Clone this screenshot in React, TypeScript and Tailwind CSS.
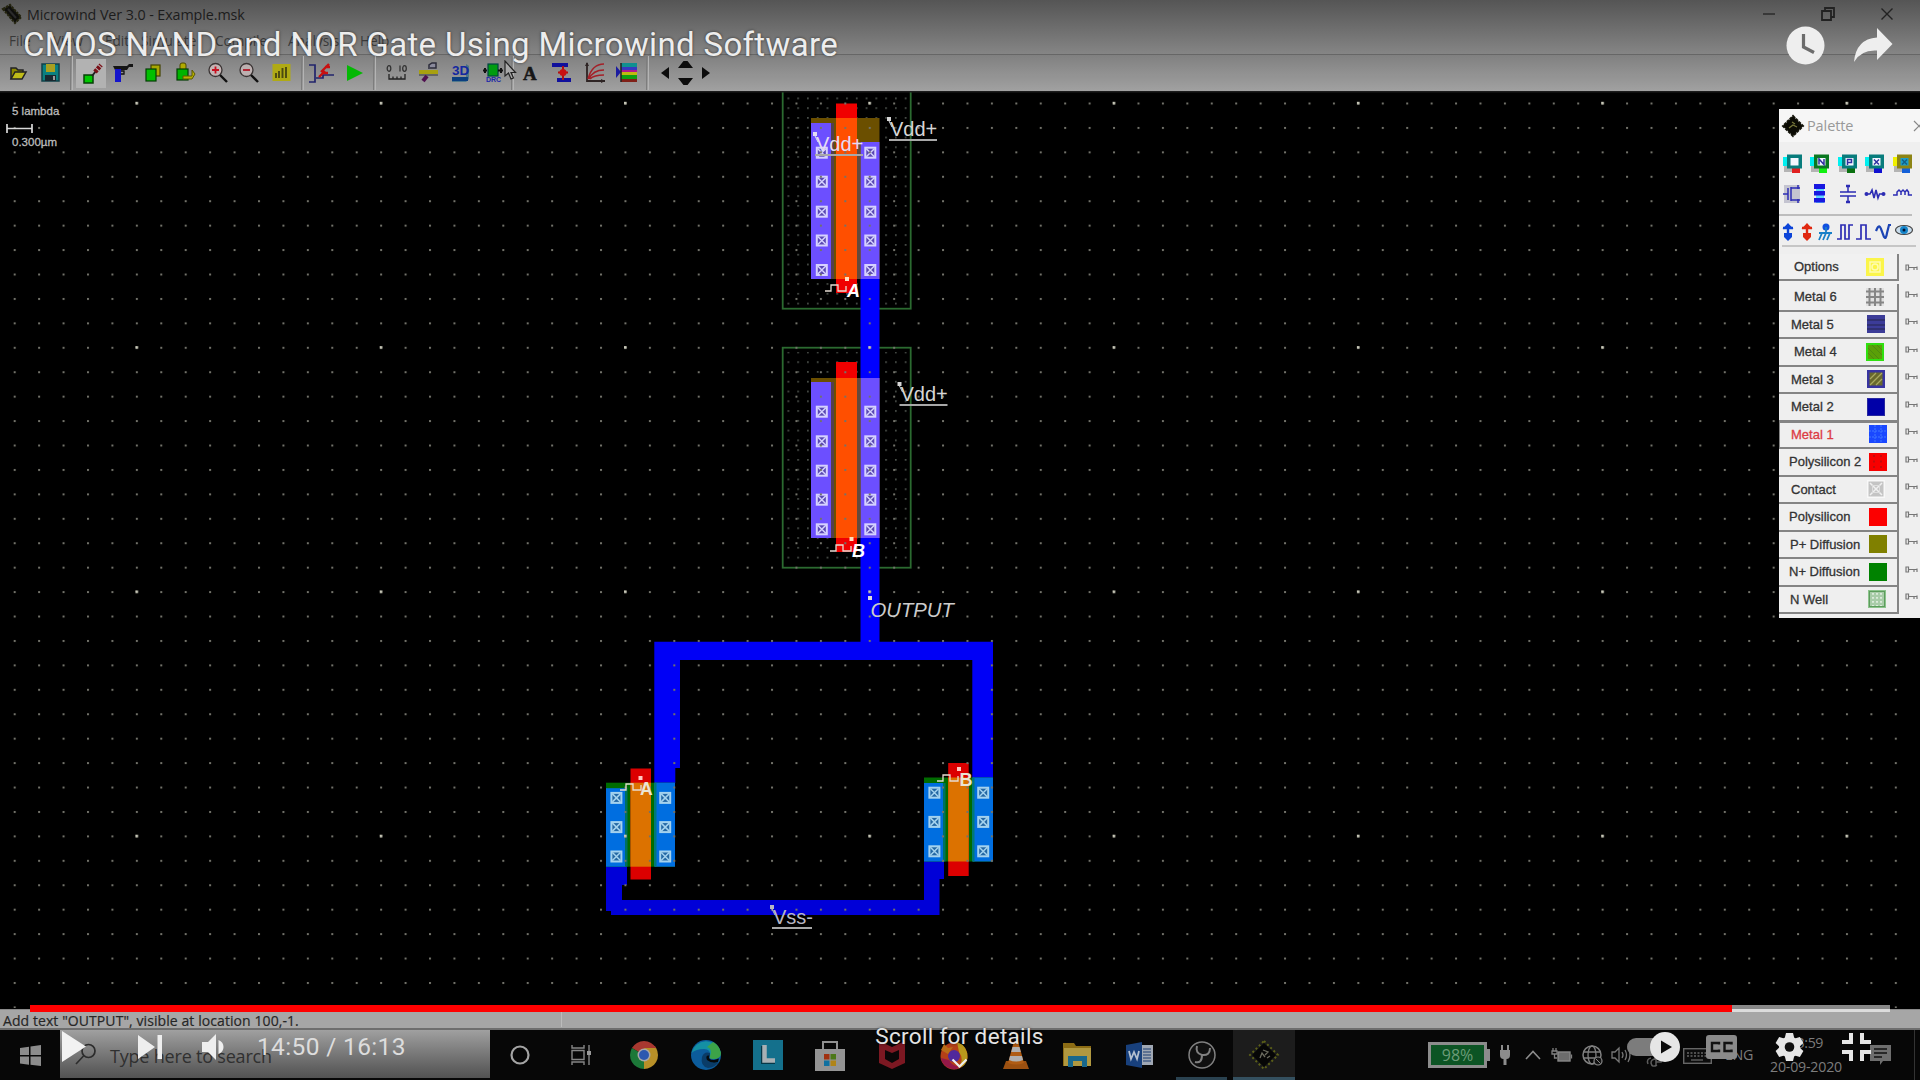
import React from "react";

const STEP = 24.43;

function Svg({ w, h, children, className = "" }: { w: number; h: number; children: React.ReactNode; className?: string }) {
  return (
    <svg width={w} height={h} viewBox={`0 0 ${w} ${h}`} className={"shrink-0 overflow-visible " + className}>
      {children}
    </svg>
  );
}

/* ---------- window chrome ---------- */

function ChipLogo() {
  return (
    <Svg w={20} h={20}>
      <path d="M1 5 L8 1 L19 13 L13 19 Z" fill="#0e0e0c" stroke="#24240f" strokeWidth="2.2" strokeDasharray="2.5 1" />
      <path d="M6 5 L14 14" stroke="#2a2a2a" strokeWidth="2" />
    </Svg>
  );
}

function TitleBar() {
  return (
    <div className="flex h-[28px] items-center pl-[2px]">
      <ChipLogo />
      <span className="ml-[5px] mt-[2px] whitespace-nowrap text-[14.3px] leading-none tracking-[-0.08px] text-[#1c1c1c]">Microwind Ver 3.0 - Example.msk</span>
      <div className="ml-auto mr-[27px] flex items-center gap-[46px]">
        <Svg w={12} h={14}>
          <path d="M0 7 H12" stroke="#222" strokeWidth="1.3" />
        </Svg>
        <Svg w={14} h={14}>
          <path d="M1 4 H10 V13 H1 Z M4 4 V1 H13 V10 H10" fill="none" stroke="#222" strokeWidth="1.8" />
        </Svg>
        <Svg w={12} h={14}>
          <path d="M0.5 1.5 L11.5 12.5 M11.5 1.5 L0.5 12.5" stroke="#222" strokeWidth="1.4" />
        </Svg>
      </div>
    </div>
  );
}

const MENUS = [
  { t: "File", c: "w-[44px]" },
  { t: "View", c: "w-[52px]" },
  { t: "Edit", c: "w-[36px]" },
  { t: "Simulate", c: "w-[74px]" },
  { t: "Compile", c: "w-[73px]" },
  { t: "Analysis", c: "w-[72px]" },
  { t: "Help", c: "w-[40px]" },
];

function MenuBar() {
  return (
    <div className="flex h-[26px] items-center pl-[9px] text-[13.6px] leading-none text-[#393939]">
      {MENUS.map((m) => (
        <span key={m.t} className={m.c}>{m.t}</span>
      ))}
    </div>
  );
}

function Sep() {
  return <div className="h-[34px] w-[3px] shrink-0 border-l border-r border-l-[#7d7d7d] border-r-[#b4b4b4]" />;
}

const GROUP2 = [
  <Svg w={22} h={22}>
    <rect x="2" y="12" width="9" height="8" fill="#00c800" stroke="#064006" strokeWidth="1.5" />
    <path d="M10 13 L14 8" stroke="#222" strokeWidth="2" />
    <path d="M13 9 L19 2" stroke="#7a1018" strokeWidth="4.5" strokeDasharray="3 1" />
  </Svg>,
  <Svg w={22} h={22}>
    <path d="M1 4 H15 L17 2 H21 V5 H17 L15 8 H3 Z" fill="#151515" />
    <rect x="3" y="7" width="6" height="13" fill="#1414cc" />
    <path d="M9 9 H12 V12 H9" fill="none" stroke="#111" strokeWidth="1.3" />
  </Svg>,
  <Svg w={20} h={22}>
    <rect x="7" y="3" width="9" height="11" fill="#a8a800" stroke="#444400" strokeWidth="1.2" />
    <rect x="2" y="7" width="10" height="12" fill="#00c000" stroke="#043c04" strokeWidth="1.2" />
  </Svg>,
  <Svg w={22} h={22}>
    <rect x="5" y="1" width="6" height="8" rx="2" fill="#b0aa00" stroke="#4a4800" strokeWidth="1" />
    <rect x="2" y="7" width="11" height="11" fill="#00b400" stroke="#043c04" strokeWidth="1.2" />
    <path d="M8 14 H17 V8 L20 12 L17 17 H8 Z" fill="#b8b000" stroke="#5a5800" strokeWidth="1" />
  </Svg>,
  <Svg w={22} h={22}>
    <circle cx="8.5" cy="8" r="6.5" fill="#c4b4b4" stroke="#3a3434" strokeWidth="1.3" />
    <path d="M5 8 H12 M8.5 4.5 V11.5" stroke="#c81020" strokeWidth="1.8" />
    <path d="M13 13 L20 20" stroke="#111" strokeWidth="2.4" />
  </Svg>,
  <Svg w={22} h={22}>
    <circle cx="8.5" cy="8" r="6.5" fill="#bcb0b0" stroke="#3a3434" strokeWidth="1.3" />
    <path d="M5 8 H12" stroke="#b01828" strokeWidth="1.8" />
    <path d="M13 13 L20 20" stroke="#111" strokeWidth="2.4" />
  </Svg>,
  <Svg w={20} h={20}>
    <rect x="1.5" y="1" width="18" height="17" fill="#b0aa14" />
    <path d="M5 15 V10 M8 15 V8 M11.5 15 V5 M15 15 V4" stroke="#4c4a10" strokeWidth="1.9" />
  </Svg>,
];

const GROUP3 = [
  <Svg w={26} h={22}>
    <path d="M0 3 H6 V20 H0 M7 16 H14 V13 H25" fill="none" stroke="#22246c" strokeWidth="1.7" />
    <path d="M10 15 L16 9 M12 10 L20 2 M13 11 H19 M16 5 H21" stroke="#c81010" strokeWidth="2.4" fill="none" />
  </Svg>,
  <Svg w={18} h={20}>
    <path d="M1 2 L17 10 L1 18 Z" fill="#04b804" />
  </Svg>,
];

const GROUP4 = [
  <Svg w={22} h={22}>
    <path d="M3 12 V17 H19 V12 M7 17 V14.5 M11 17 V14.5 M15 17 V14.5" fill="none" stroke="#222" strokeWidth="1.3" />
    <ellipse cx="3" cy="6.500" rx="1.800" ry="2.800" fill="none" stroke="#333" strokeWidth="1.3" />
    <ellipse cx="18.500" cy="6.500" rx="1.800" ry="2.800" fill="none" stroke="#333" strokeWidth="1.3" />
    <path d="M14 3.500 V9.500" stroke="#333" strokeWidth="1.3" />
  </Svg>,
  <Svg w={22} h={22}>
    <path d="M11 7 V3 L14 1 H18 V6 H12" fill="#8a8a9c" stroke="#2b2b3a" strokeWidth="1.5" />
    <rect x="1" y="8" width="19" height="4" fill="#a8a010" />
    <path d="M1 13 H20" stroke="#555" strokeWidth="1.5" />
    <path d="M5 19 L9 14" stroke="#501050" strokeWidth="4" />
  </Svg>,
  <Svg w={22} h={22}>
    <path d="M2 15 H16 V2 L19 4 V17 L16 20 H2 Z" fill="#0d5c80" opacity="0.5" />
    <path d="M2 17 H18" stroke="#0b3f80" strokeWidth="4" />
    <text x="2" y="13" fontFamily="Liberation Sans" fontWeight="700" fontSize="13.500" fill="#1428a0">3D</text>
  </Svg>,
  <Svg w={20} h={24}>
    <rect x="5" y="3" width="10" height="12" fill="#009c10" stroke="#044" strokeWidth="1.2" />
    <path d="M0 9.5 H4 M15 9.5 H20 M2 7 V12 M18 7 V12" stroke="#111" strokeWidth="2" />
    <text x="3" y="21" fontFamily="Liberation Sans" fontWeight="700" fontSize="7" fill="#1c28a8">DRC</text>
  </Svg>,
];

const GROUP5 = [
  <span className="font-['Liberation_Serif',serif] text-[19px] font-bold leading-none text-[#161616] [-webkit-text-stroke:0.5px_#161616]">A</span>,
  <Svg w={20} h={22}>
    <path d="M0 3 H16 M5 18 H19" stroke="#10109c" strokeWidth="4" />
    <path d="M11 4 V18 M6 10.5 H16" stroke="#b01010" strokeWidth="2" />
    <circle cx="11" cy="10.5" r="3.5" fill="#c81010" />
  </Svg>,
  <Svg w={22} h={22}>
    <path d="M3 1 V19 H21" stroke="#2e2424" strokeWidth="1.8" fill="none" />
    <path d="M4 17 Q8 2 20 2 M5 17 Q9 8 20 8 M6 17 Q10 13 20 13" stroke="#a42028" strokeWidth="1.5" fill="none" />
    <path d="M1 4 L3 0 L5 4Z M17 17 L21 19 L17 21Z" fill="#2e2424" />
  </Svg>,
  <Svg w={24} h={22}>
    <path d="M1 4 V16 L6 10 Z" fill="#1c1ca0" />
    <rect x="6" y="1" width="16" height="4" fill="#109090" />
    <rect x="6" y="5" width="16" height="3" fill="#3838c0" />
    <rect x="6" y="8" width="16" height="2" fill="#b01890" />
    <rect x="6" y="10" width="16" height="3" fill="#c0b810" />
    <rect x="6" y="13" width="16" height="4" fill="#10a010" />
    <rect x="6" y="17" width="16" height="3" fill="#802018" />
    <path d="M6 1 V20" stroke="#222" strokeWidth="1.5" />
  </Svg>,
];

function Group({ items, cell }: { items: React.ReactNode[]; cell: string }) {
  return (
    <div className="flex h-full items-center">
      {items.map((it, i) => (
        <div key={i} className={"flex shrink-0 items-center justify-center " + cell}>{it}</div>
      ))}
    </div>
  );
}

function ToolBar() {
  return (
    <div className="flex h-[37px] items-center border-t border-t-[#666] bg-black/[0.04] pl-[2px]">
      <Group
        cell="w-[32.5px]"
        items={[
          <Svg w={18} h={16}>
            <path d="M2 14 V3 H7 L9 5 H14 V7" fill="#8c8800" stroke="#222" strokeWidth="1.5" />
            <path d="M2 14 L6 7 H17 L13 14 Z" fill="#c0bc18" stroke="#222" strokeWidth="1.5" />
          </Svg>,
          <Svg w={19} h={20}>
            <rect x="1" y="1" width="17" height="17" fill="#0a8080" stroke="#104048" strokeWidth="1.5" />
            <rect x="5" y="1" width="9" height="8" fill="#a8a020" />
            <rect x="4" y="12" width="11" height="6" fill="#182830" />
            <rect x="12" y="13" width="2" height="4" fill="#999" />
          </Svg>,
        ]}
      />
      <div className="ml-[3px]"><Sep /></div>
      <div className="ml-[3px] flex h-full items-center">
        <div className="flex h-[29px] w-[30px] items-center justify-center bg-[#b2b2b2] pl-[4px] pt-[2px]">{GROUP2[0]}</div>
        <div className="ml-px h-full"><Group items={GROUP2.slice(1)} cell="w-[31.6px]" /></div>
      </div>
      <div className="ml-[4px]"><Sep /></div>
      <div className="ml-[2px] h-full"><Group items={GROUP3} cell="w-[33px]" /></div>
      <div className="ml-[1px]"><Sep /></div>
      <div className="ml-[5px] h-full"><Group items={GROUP4} cell="w-[32px]" /></div>
      <div className="ml-[2px]"><Sep /></div>
      <Group items={GROUP5} cell="w-[32.5px]" />
      <div className="ml-[2px]"><Sep /></div>
      <div className="ml-[12px] flex items-center">
        <Svg w={8} h={12}><path d="M8 0 V12 L0 6 Z" fill="#0c0c0c" /></Svg>
        <Svg w={15} h={24} className="ml-[9px]"><path d="M0 7 L5.5 0 H9.500 L15 7 Z M0 17 L5.500 24 H9.500 L15 17 Z" fill="#0c0c0c" /></Svg>
        <Svg w={8} h={12} className="ml-[9px]"><path d="M0 0 V12 L8 6 Z" fill="#0c0c0c" /></Svg>
      </div>
    </div>
  );
}

/* ---------- layout canvas ---------- */

function Contact({ x, y, box, ink }: { x: number; y: number; box: string; ink: string }) {
  return (
    <g>
      <rect x={x - 6} y={y - 6} width="12" height="12" fill={box} />
      <rect x={x - 4} y={y - 4} width="8" height="8" fill={ink} />
      <path d={`M${x - 4} ${y - 4} l8 8 m0 -8 l-8 8`} stroke={box} strokeWidth="1.5" />
    </g>
  );
}

function Clock({ x, y }: { x: number; y: number }) {
  return <path d={`M${x} ${y} h6 v-6 h7 v6 h8 v-5`} fill="none" stroke="#e6dcd2" strokeWidth="1.3" />;
}

function Net({ x, y, label, lineW, fill = "#d6d6d6" }: { x: number; y: number; label: string; lineW: number; fill?: string }) {
  return (
    <g>
      <text x={x} y={y} fontSize="20" fill={fill}>{label}</text>
      <rect x={x - 1} y={y + 3} width={lineW} height="2" fill="#a8a8a8" />
      <rect x={x - 3} y={y - 19} width="4" height="4" fill={fill} />
      <path d={`M${x - 1} ${y - 15} l3 6`} stroke={fill} strokeWidth="1" />
    </g>
  );
}

const BRIGHT = "#6c4fff";

function PDevice({ top, left, right, bottom, polyTop, polyBottom, contacts }: { top: number; left: number; right: number; bottom: number; polyTop: number; polyBottom: number; contacts: number[] }) {
  return (
    <g>
      <rect x="811" y={top} width="68.5" height={bottom - top} fill="#6b4f00" />
      <rect x="811" y={left} width="20.500" height={bottom - left} fill={BRIGHT} />
      <rect x="860.500" y={right} width="19" height={bottom - right} fill={BRIGHT} />
      <rect x="831" y={left} width="3" height={bottom - left} fill="#54404c" />
      <rect x="857" y={right} width="3.500" height={bottom - right} fill="#644a3c" />
      <rect x="836" y={polyTop} width="21" height={polyBottom - polyTop} fill="#f00000" />
      <rect x="836" y={top} width="21" height={bottom - top} fill="#ff4f00" />
      {contacts.map((c) => (
        <g key={c}>
          <Contact x={821.8} y={c} box="#d6d2ff" ink="#5a48b4" />
          <Contact x={870.3} y={c} box="#d6d2ff" ink="#5a48b4" />
        </g>
      ))}
    </g>
  );
}

function NDevice({ x, y, polyTop, polyBottom, poly }: { x: number; y: number; polyTop: number; polyBottom: number; poly: number }) {
  return (
    <g>
      <rect x={x} y={y} width="69" height="84" fill="#006c00" />
      <rect x={x} y={y + 5.5} width="20" height="78.500" fill="#006ee0" />
      <rect x={x + 49} y={y} width="20" height="84" fill="#006ee0" />
      <rect x={x + 19} y={y + 5.5} width="2.500" height="78.500" fill="#007060" />
      <rect x={x + 48} y={y} width="2.500" height="84" fill="#007878" />
      <rect x={poly} y={polyTop} width="20.500" height={polyBottom - polyTop} fill="#dc0000" />
      <rect x={poly} y={y} width="20.500" height="84" fill="#dc7200" />
      {[15.2, 44.4, 73.8].map((d) => (
        <g key={d}>
          <Contact x={x + 10.4} y={y + d} box="#a4d2ee" ink="#2468a4" />
          <Contact x={x + 59.2} y={y + d} box="#a4d2ee" ink="#2468a4" />
        </g>
      ))}
    </g>
  );
}

function LayoutCanvas() {
  return (
    <svg width="1920" height="918" viewBox="0 91 1920 918" className="block shrink-0 bg-black" fontFamily="Liberation Sans, Arial, sans-serif">
      <defs>
        <pattern id="grid" x="13.700" y="102.500" width={STEP} height={STEP} patternUnits="userSpaceOnUse">
          <rect width="2" height="2" fill="#72726a" />
        </pattern>
        <pattern id="major" x="135.400" y="101.800" width={STEP * 10} height={STEP * 10} patternUnits="userSpaceOnUse">
          <rect width="2.600" height="2.600" fill="#c8c8b8" />
        </pattern>
        <pattern id="well" x="787.500" y="97.500" width="9.770" height="9.770" patternUnits="userSpaceOnUse">
          <rect width="1.700" height="1.700" fill="#4c524c" />
        </pattern>
      </defs>

      <rect x="786" y="94" width="124" height="212" fill="url(#well)" />
      <rect x="786" y="352" width="124" height="212" fill="url(#well)" />
      <rect x="782.700" y="80" width="128" height="228.700" fill="none" stroke="#2b6a30" strokeWidth="1.800" />
      <rect x="782.700" y="347.700" width="128" height="220" fill="none" stroke="#2b6a30" strokeWidth="1.800" />

      <rect x="860.500" y="279" width="19" height="364" fill="#0000ff" />
      <path d="M654.300 641.700 H993 V778 H972.300 V660 H680 V768 H675.300 V783 H654.300 Z" fill="#0000f6" />
      <path d="M606 866 H627 V885 H622 V900 H924 V860 H944 V879 H939.500 V915 H611 V911 H606 Z" fill="#0000d8" />

      <PDevice top={118} left={123} right={142} bottom={279} polyTop={103.5} polyBottom={293} contacts={[152.7, 181.7, 211.7, 240.5, 270]} />
      <PDevice top={378} left={382} right={378} bottom={538} polyTop={362} polyBottom={552} contacts={[411.7, 441.3, 470.7, 499.7, 529.3]} />
      <NDevice x={606} y={782.7} poly={630.5} polyTop={768.5} polyBottom={879.5} />
      <NDevice x={924} y={777.5} poly={948.2} polyTop={763} polyBottom={876} />

      <rect x="0" y="93" width="1918" height="915" fill="url(#grid)" />
      <rect x="0" y="93" width="1918" height="915" fill="url(#major)" />

      <Net x={890} y={136} label="Vdd+" lineW={48} />
      <Net x={816} y={151} label="Vdd+" lineW={48} fill="#e4dcf4" />
      <Net x={900.5} y={401} label="Vdd+" lineW={48} />
      <Net x={773} y={924} label="Vss-" lineW={40} fill="#b8b8c4" />
      <rect x="868" y="596" width="4" height="4" fill="#ddd" />
      <text x="870.500" y="617" fontSize="20.300" fontStyle="italic" fill="#cccccc">OUTPUT</text>

      <Clock x={825} y={291} />
      <rect x="845" y="277" width="4" height="4" fill="#ffe0c0" />
      <text x="847" y="296.500" fontSize="18" fontWeight="700" fontStyle="italic" fill="#fff">A</text>
      <Clock x={830} y={551} />
      <rect x="849.500" y="537" width="4" height="4" fill="#ffe0c0" />
      <text x="852" y="557" fontSize="18" fontWeight="700" fontStyle="italic" fill="#fff">B</text>
      <Clock x={620} y={790} />
      <rect x="638.500" y="776" width="4" height="4" fill="#ffc8c0" />
      <text x="640" y="795" fontSize="17.500" fontWeight="700" fill="#eae4d4">A</text>
      <Clock x={937} y={781} />
      <rect x="957" y="767" width="4" height="4" fill="#ffc8c0" />
      <text x="959.500" y="786" fontSize="18" fontWeight="700" fill="#eae4d4">B</text>

      <text x="12" y="114.700" fontSize="11.500" fill="#bdbdbd" stroke="#bdbdbd" strokeWidth="0.300">5 lambda</text>
      <path d="M7 124 V133 M7 128.500 H32 M32 124 V133" stroke="#d8d8d8" strokeWidth="1.700" />
      <text x="12" y="146" fontSize="11.500" fill="#bdbdbd" stroke="#bdbdbd" strokeWidth="0.300">0.300µm</text>
      <rect x="0" y="91" width="1920" height="1.500" fill="#1c1c1c" />
    </svg>
  );
}

/* ---------- palette ---------- */

function ViaIcon({ bg, main, foot, ch }: { bg: string; main: string; foot: string; ch: string }) {
  return (
    <Svg w={20} h={20}>
      <rect x="1" y="5" width="12" height="13" fill="#b4b4b4" />
      <rect x="0" y="3" width="8" height="9" fill={bg} />
      <rect x="9" y="13" width="8" height="6" fill={foot} />
      <rect x="4" y="0.500" width="15" height="14" fill={main} />
      <rect x="7.500" y="4" width="8" height="7.500" fill={ch === "*" ? "#1c9cc8" : "#f4f8ff"} />
      {ch === "N" && <path d="M9 10.500 V5 L14 10.500 V5" stroke="#3030a0" strokeWidth="1.500" fill="none" />}
      {ch === "P" && <path d="M9.500 11 V5.500 H13.500 V8.500 H9.500" stroke="#3030a0" strokeWidth="1.500" fill="none" />}
      {(ch === "X" || ch === "*") && <path d="M9 5.500 L14 10.500 M14 5.500 L9 10.500" stroke={ch === "X" ? "#3030a0" : "#106088"} strokeWidth="1.500" />}
    </Svg>
  );
}

const INK = "#2c2cb4";

function Pin({ color }: { color: string }) {
  return (
    <Svg w={12} h={18}>
      <path d="M6 2 V16 M1 5 H11" stroke={color} strokeWidth="2.400" />
      <path d="M0.500 6 L6 0 L11.500 6 Z" fill={color} />
      <path d="M2 10 H10 V14 L6 18 L2 14 Z" fill={color} />
    </Svg>
  );
}

function Key() {
  return (
    <Svg w={13} h={8}>
      <path d="M1 1 H3.500 V6 H1 Z M4 3.500 H12 M9 3.500 V6 M12 2.500 V6" fill="none" stroke="#777" strokeWidth="1.200" />
    </Svg>
  );
}

function Swatch({ kind }: { kind: string }) {
  const s = 18;
  const r = (fill: string) => <rect width={s} height={s} fill={fill} />;
  return (
    <Svg w={s} h={s}>
      {kind === "options" && <>{r("#fbf54a")}<rect x="4" y="4" width="10" height="10" fill="none" stroke="#fffcb0" strokeWidth="1.500" /><circle cx="9" cy="9" r="3" fill="none" stroke="#fffcb0" strokeWidth="1.500" /></>}
      {kind === "m6" && <>{r("#e0e0e0")}<path d="M3.500 0 V18 M9 0 V18 M14.500 0 V18 M0 3.500 H18 M0 9 H18 M0 14.500 H18" stroke="#858585" strokeWidth="2" /></>}
      {kind === "m5" && <>{r("#3c3c98")}<path d="M0 5 H18 M0 10 H18 M0 14 H18" stroke="#2c2c66" strokeWidth="1.600" /></>}
      {kind === "m4" && <>{r("#30e010")}<rect x="2" y="2" width="14" height="14" fill="#5aa008" /><path d="M2 5 L13 16 M2 10 L8 16 M6 2 L16 12 M11 2 L16 7" stroke="#4c8c10" strokeWidth="1" /></>}
      {kind === "m3" && <>{r("#3834a0")}<rect x="2.500" y="2.500" width="13" height="13" fill="#68682c" /><path d="M3 9 L9 3 M3 15 L15 3 M9 15 L15 9" stroke="#a8a860" strokeWidth="1.300" /></>}
      {kind === "m2" && <>{r("#0000a8")}<rect x="0.500" y="0.500" width="17" height="17" fill="none" stroke="#2828a0" /></>}
      {kind === "m1" && <>{r("#1a48ff")}<path d="M6 0 V18 M12 0 V18 M0 6 H18 M0 12 H18" stroke="#4078ff" strokeWidth="1" strokeDasharray="2 1" /></>}
      {kind === "p2" && <>{r("#f80000")}<path d="M5 2 V16 M12 2 V16" stroke="#b41010" strokeWidth="1.600" strokeDasharray="2 3.500" /></>}
      {kind === "contact" && <>{r("#f8f8f8")}<rect x="1.500" y="1.500" width="15" height="15" fill="#c4c4c4" /><path d="M3 3 L15 15 M15 3 L3 15" stroke="#f0f0f0" strokeWidth="1.500" /><rect x="5.500" y="5.500" width="7" height="7" fill="none" stroke="#dedede" /></>}
      {kind === "poly" && r("#fc0000")}
      {kind === "pd" && r("#808000")}
      {kind === "nd" && r("#008200")}
      {kind === "well" && <>{r("#8cc48c")}<rect x="1.500" y="1.500" width="15" height="15" fill="#a8cca8" stroke="#5c9c5c" /><path d="M5 3 V16 M9 3 V16 M13 3 V16" stroke="#e8f2e8" strokeWidth="1.600" strokeDasharray="1.800 2.200" /></>}
    </Svg>
  );
}

const LAYERS = [
  { n: "Metal 6", k: "m6", l: "pl-[15px]", s: "right-[13px]" },
  { n: "Metal 5", k: "m5", l: "pl-[12px]", s: "right-[12px]" },
  { n: "Metal 4", k: "m4", l: "pl-[15px]", s: "right-[13px]" },
  { n: "Metal 3", k: "m3", l: "pl-[12px]", s: "right-[12px]" },
  { n: "Metal 2", k: "m2", l: "pl-[12px]", s: "right-[12px]" },
  { n: "Metal 1", k: "m1", l: "pl-[11px]", s: "right-[10px]" },
  { n: "Polysilicon 2", k: "p2", l: "pl-[10px]", s: "right-[10px]" },
  { n: "Contact", k: "contact", l: "pl-[12px]", s: "right-[12px]" },
  { n: "Polysilicon", k: "poly", l: "pl-[10px]", s: "right-[10px]" },
  { n: "P+ Diffusion", k: "pd", l: "pl-[11px]", s: "right-[10px]" },
  { n: "N+ Diffusion", k: "nd", l: "pl-[10px]", s: "right-[10px]" },
  { n: "N Well", k: "well", l: "pl-[11px]", s: "right-[11px]" },
];

function Palette() {
  return (
    <div className="absolute left-[1779px] top-[109px] h-[509px] w-[141px] overflow-hidden bg-[#efefef]">
      <div className="flex h-[33px] items-center bg-[#f6f6f6] pl-[4px]">
        <Svg w={20} h={20}>
          <path d="M10 0 L20 10 L10 20 L0 10 Z" fill="#0a0a04" stroke="#14140a" strokeWidth="2" strokeDasharray="3 1" />
          <path d="M6 12 L10 9 L14 11 M9 6 L12 8" stroke="#77773a" strokeWidth="1.200" fill="none" />
        </Svg>
        <span className="ml-[4px] mt-[1px] w-[106px] shrink-0 text-[14.500px] leading-none tracking-[-0.100px] text-[#999]">Palette</span>
        <Svg w={12} h={12}><path d="M1 1 L11 11 M11 1 L1 11" stroke="#888" strokeWidth="1.200" /></Svg>
      </div>
      <div className="flex h-[42px] items-start gap-[7.400px] pl-[4px] pt-[12px]">
        <ViaIcon bg="#00f0f0" main="#087c7c" foot="#e02020" ch="" />
        <ViaIcon bg="#00f0f0" main="#0a7820" foot="#10f010" ch="N" />
        <ViaIcon bg="#00f0f0" main="#087c7c" foot="#0a7010" ch="P" />
        <ViaIcon bg="#00f0f0" main="#087c7c" foot="#1010d0" ch="X" />
        <ViaIcon bg="#f0f000" main="#8c8414" foot="#1460d8" ch="*" />
      </div>
      <div className="flex h-[20px] items-center gap-[7.400px] pl-[4px]">
        <Svg w={20} h={20}><rect x="1" y="1" width="16" height="18" fill="#c4c4d0" /><path d="M0 10 H5 M5 4 V16 M8 3 V17 M8 4 H17 M8 16 H17 M15 1 V5 M15 15 V19" stroke={INK} strokeWidth="1.500" fill="none" /></Svg>
        <Svg w={20} h={20}><rect x="6" y="1" width="8" height="18" fill="#60d8ff" /><rect x="4" y="0" width="11" height="5" fill="#1818e0" /><rect x="4" y="7" width="11" height="4.500" fill="#1818e0" /><rect x="4" y="14" width="11" height="4.500" fill="#1818e0" /></Svg>
        <Svg w={20} h={20}><path d="M10 1 V8 M2 8 H18 M2 12 H18 M10 12 V19" stroke={INK} strokeWidth="1.500" /><path d="M8 2 H12 M8 18 H12" stroke={INK} strokeWidth="2.500" /></Svg>
        <Svg w={20} h={20}><path d="M1 10 H5 L7 6 L9 14 L11 6 L13 14 L14.500 10 H20" stroke={INK} strokeWidth="1.600" fill="none" /><circle cx="1.500" cy="10" r="2" fill={INK} /><circle cx="18.500" cy="10" r="2" fill={INK} /></Svg>
        <Svg w={20} h={20}><path d="M0 11 H4 V8 L6 6 L8 8 V11 V8 L10 6 L12 8 V11 V8 L14 6 L15.500 8 V11 H19" stroke={INK} strokeWidth="1.500" fill="none" /></Svg>
      </div>
      <div className="mt-[10px] h-[2px] w-[133px] bg-[#bdbdbd]" />
      <div className="flex h-[29px] items-center gap-[3.600px] pl-[3px] pt-[2px]">
        <Pin color="#0c44d8" />
        <span className="ml-[3px] flex"><Pin color="#e02810" /></span>
        <Svg w={16} h={18} className="ml-[1px]"><circle cx="9" cy="4" r="3.500" fill="#1050e0" /><path d="M9 4 V10 M2 10 H15 M5 10 L2 17 M9 10 L6 17 M13 10 L10 17" stroke="#1880c8" strokeWidth="1.800" /></Svg>
        <Svg w={16} h={18}><path d="M0 16 H4 V2 H8 V16 H12 V2 H16" stroke={INK} strokeWidth="1.700" fill="none" /></Svg>
        <Svg w={16} h={18}><path d="M0 16 H5 V2 H10 V16 H15" stroke={INK} strokeWidth="1.700" fill="none" /></Svg>
        <Svg w={15} h={18}><path d="M0 8 Q3 0 5 6 L8 14 Q10 17 11 10 L13 2 H15" stroke="#1c44b4" strokeWidth="2.200" fill="none" /></Svg>
        <Svg w={18} h={18} className="-mt-[4px]"><ellipse cx="9" cy="9" rx="8.500" ry="4.500" fill="#c8dcec" stroke="#444" strokeWidth="1.200" /><circle cx="9" cy="9" r="4" fill="#1484c8" /><circle cx="9" cy="9" r="1.500" fill="#013" /></Svg>
      </div>
      <div className="ml-[3px] h-[2px] w-[134px] bg-[#c6c6c6]" />
      <div className="mt-[7px] flex items-center font-['Liberation_Sans',Arial,sans-serif] text-[13px] text-[#333]">
        <div className="relative flex h-[27px] w-[120px] items-center border-b-2 border-r-2 border-[#848484] bg-[#f1f1f1] pl-[15px] [-webkit-text-stroke:0.3px_#333]">
          Options
          <span className="absolute right-[13px]"><Swatch kind="options" /></span>
        </div>
        <span className="ml-[6px]"><Key /></span>
      </div>
      <div className="mt-[3px] font-['Liberation_Sans',Arial,sans-serif] text-[13px] text-[#333]">
        {LAYERS.map((l) => (
          <div key={l.n} className="flex h-[27.5px] items-center">
            <div
              className={
                "relative flex h-full w-[120px] items-center whitespace-nowrap border-b-2 border-r-2 border-[#848484] bg-[#efefef] " +
                l.l +
                (l.k === "m1" ? " border-l border-t pb-px text-[#dc3c44] [-webkit-text-stroke:0.3px_#dc3c44]" : " [-webkit-text-stroke:0.3px_#333]")
              }
            >
              {l.n}
              <span className={"absolute " + l.s}><Swatch kind={l.k} /></span>
            </div>
            <span className="-mt-[6px] ml-[6px]"><Key /></span>
          </div>
        ))}
      </div>
    </div>
  );
}

/* ---------- taskbar ---------- */

const APPS = [
  <Svg w={20} h={20}><circle cx="10" cy="10" r="8.500" fill="none" stroke="#a4a4a4" strokeWidth="2.200" /></Svg>,
  <Svg w={22} h={20}><path d="M1 0 V3 H13 V0 M1 20 V17 H13 V20 M1 5.500 H13 V14.500 H1 Z M18 0 V20" fill="none" stroke="#868686" strokeWidth="1.400" /><rect x="16" y="6" width="4" height="4" fill="#999" /></Svg>,
  <Svg w={28} h={28}>
    <path d="M14 14 L1.880 7 A14 14 0 0 1 26.120 7 Z" fill="#a83830" />
    <path d="M14 14 L26.120 7 A14 14 0 0 1 14 28 Z" fill="#b89028" />
    <path d="M14 14 L14 28 A14 14 0 0 1 1.880 7 Z" fill="#1c7838" />
    <path d="M14 7 H26.200 L20 17 Z" fill="#b89028" /><path d="M14 7 H26 L25 5 H10 Z" fill="#a83830" />
    <circle cx="14" cy="14" r="6.500" fill="#a8a8a8" /><circle cx="14" cy="14" r="5" fill="#2c58b0" />
  </Svg>,
  <Svg w={30} h={30}>
    <circle cx="15" cy="15" r="15" fill="#0c5c9c" />
    <path d="M0.500 13 A15 15 0 0 1 29.500 12 Q30 19 22 19 Q18 19 19 16 Q20 9 13 9 Q5 9 0.500 13 Z" fill="#1490a4" />
    <path d="M22 2 A15 15 0 0 1 30 13 Q30 19 22 19 Q18 19 19 16 Q22 9 16 7 Z" fill="#3ca448" />
    <path d="M19 16 Q16 19 20 22 Q24 24 28 22 A15 15 0 0 1 17 28 Q9 26 11 17 Q13 11 19 13 Z" fill="#0a3c68" />
    <path d="M18 15.500 Q17 20 23 20 L28 18.500 L27 22 Q21 24 16 20 Q14 15 18 15.500Z" fill="#060a0c" />
  </Svg>,
  <Svg w={30} h={30}><rect width="30" height="30" fill="#14708c" /><path d="M10 6 V22 H22" stroke="#063848" strokeWidth="4" fill="none" /><path d="M11.500 5 V20.500 H22" stroke="#a8b0b4" strokeWidth="4.500" fill="none" /></Svg>,
  <Svg w={30} h={31}><path d="M8 10 V2 H22 V10" fill="none" stroke="#909090" strokeWidth="2" /><rect y="9" width="30" height="22" fill="#949494" /><rect x="9" y="14" width="5.500" height="5.500" fill="#a03010" /><rect x="15.500" y="14" width="5.500" height="5.500" fill="#4c7818" /><rect x="9" y="20.500" width="5.500" height="5.500" fill="#1070a0" /><rect x="15.500" y="20.500" width="5.500" height="5.500" fill="#b08418" /></Svg>,
  <Svg w={26} h={28}><path d="M0 0 L13 6 L26 0 V22 L13 28 L0 22 Z" fill="#7c1822" /><path d="M6 9 L13 12 L20 9 V18 L13 22 L6 18 Z" fill="#0a0708" /></Svg>,
  <Svg w={30} h={30}><circle cx="15" cy="16" r="13.500" fill="#b44018" /><path d="M2 18 A13.500 13.500 0 0 0 24 26 Q14 28 10 20 Z" fill="#941848" /><path d="M18 2 Q29 6 28.500 18 Q27 27 19 28 Q26 20 20 12 Z" fill="#b8981c" /><circle cx="15" cy="16" r="6" fill="#50289c" /><path d="M2 10 L5 4 L9 8 L14 7 L9 14 Z" fill="#b86c18" /></Svg>,
  <Svg w={26} h={28}><path d="M3 20 H23 L26 28 H0 Z" fill="#9c5010" /><path d="M11 0 H15 L21 22 Q13 25 5 22 Z" fill="#b05c14" /><path d="M9.500 6 H16.500 L17.800 11 H8.200 Z M7 15 H19 L20 19 Q13 22 6 19 Z" fill="#b0b0b0" /></Svg>,
  <Svg w={29} h={25}><path d="M0 0 H11 L13 3 H28 V23 H0 Z" fill="#8c6c14" /><rect x="1" y="5" width="27" height="18" fill="#b09840" /><path d="M5 24 V13 H24 V24 H19 V18 H10 V24 Z" fill="#18688c" /></Svg>,
  <Svg w={28} h={26}><rect x="14" y="3" width="13" height="20" fill="#a0a8b4" /><path d="M17 7 H25 M17 10 H25 M17 13 H25 M17 16 H25 M17 19 H25" stroke="#1c3c70" strokeWidth="1.200" /><path d="M0 3 L16 0 V26 L0 23 Z" fill="#18407c" /><path d="M3 9 L5 17 L8 10 L11 17 L13 9" stroke="#b4c0d0" strokeWidth="1.800" fill="none" /></Svg>,
  <Svg w={28} h={28}><circle cx="14" cy="14" r="13" fill="#101010" stroke="#808080" strokeWidth="1.500" /><path d="M9 5 Q7 12 14 14 M14 14 Q22 15 22 7 M14 14 Q14 23 7 21" fill="none" stroke="#808080" strokeWidth="2" /></Svg>,
  <Svg w={28} h={28}><path d="M14 0 L28 14 L14 28 L0 14 Z" fill="none" stroke="#5c6018" strokeWidth="2" strokeDasharray="2 2.500" /><path d="M14 2 L26 14 L14 26 L2 14 Z" fill="#060606" /><path d="M10 17 L12 12 L15 16 M13 9 L18 11 L15 14 M17 17 L20 15" stroke="#6c6c60" strokeWidth="1.300" fill="none" /></Svg>,
];

function Taskbar() {
  return (
    <div className="flex h-[50px] shrink-0 bg-[#070707]">
      <div className="flex w-[60px] items-center justify-center">
        <Svg w={21} h={21}><path d="M0 3 L9 1.700 V10 H0 Z M10.500 1.500 L21 0 V10 H10.500 Z M0 11.500 H9 V19.700 L0 18.500 Z M10.500 11.500 H21 V21 L10.500 19.800 Z" fill="#8c8c8c" /></Svg>
      </div>
      <div className="flex h-[48px] w-[430px] items-center bg-gradient-to-b from-[#a0a0a0] to-[#525252] pl-[14px]">
        <Svg w={22} h={22}><circle cx="14.500" cy="8" r="6.500" fill="none" stroke="#2c2c2c" strokeWidth="1.700" /><path d="M9.500 13 L2 21" stroke="#2c2c2c" strokeWidth="1.700" /></Svg>
        <span className="ml-[14px] mt-[3px] whitespace-nowrap text-[18px] leading-none tracking-[-0.200px] text-[#303030]">Type here to search</span>
      </div>
      <div className="-ml-[1.500px] flex">
        {APPS.map((a, i) => (
          <div
            key={i}
            className={
              "flex w-[62px] items-center justify-center " +
              (i === 12 ? "border-b-[3px] border-[#34505f] bg-[#1c1c1c] pt-[3px]" : i === 11 ? "pt-0" : "")
            }
          >
            {i === 11 ? (
              <div className="flex h-full w-[51px] items-center justify-center border-b-[3px] border-[#2a4250] pt-[3px]">{a}</div>
            ) : (
              a
            )}
          </div>
        ))}
      </div>
      <div className="ml-[133.500px] flex items-center text-[#7c7c7c]">
        <div className="flex w-[62px] items-center">
          <div className="flex h-[26px] w-[60px] items-center justify-center border-[3px] border-[#8c8c8c] bg-[#0c5424] text-[16px] leading-none text-[#6c9c78]">98%</div>
          <div className="h-[12px] w-[3px] bg-[#8c8c8c]" />
        </div>
        <div className="flex w-[30px] justify-center"><Svg w={12} h={20}><path d="M3 0 V6 M9 0 V6" stroke="#8c8c8c" strokeWidth="2" /><path d="M1 5 H11 V10 Q11 14 7.500 14 V20 H4.500 V14 Q1 14 1 10 Z" fill="#8c8c8c" /></Svg></div>
        <div className="flex w-[25px] justify-center"><Svg w={16} h={10}><path d="M1 9 L8 1.500 L15 9" fill="none" stroke="#8c8c8c" strokeWidth="1.600" /></Svg></div>
        <div className="flex w-[34px] justify-center"><Svg w={20} h={14}><rect x="6" y="4" width="12" height="9" fill="#6c6c6c" stroke="#888" strokeWidth="1.400" /><path d="M19.500 6.500 V10.500 M1 0 V3 M4 0 V3 M0 3 H5 V6 H0 Z M2.500 6 V10 H5" stroke="#808080" strokeWidth="1.300" fill="none" /></Svg></div>
        <div className="flex w-[26px] justify-center"><Svg w={21} h={20}><circle cx="10" cy="10" r="9" fill="none" stroke="#808080" strokeWidth="1.500" /><ellipse cx="10" cy="10" rx="4" ry="9" fill="none" stroke="#808080" strokeWidth="1.300" /><path d="M1 7 H19 M1 13 H19" stroke="#808080" strokeWidth="1.300" /><circle cx="16" cy="16" r="4" fill="#111" stroke="#888" strokeWidth="1.200" /><path d="M13.500 13.500 L18.500 18.500" stroke="#888" /></Svg></div>
        <div className="flex w-[32px] justify-center"><Svg w={20} h={16}><path d="M1 5 H4 L8 1 V15 L4 11 H1 Z M11 5 Q13 8 11 11 M14 3 Q17 8 14 13 M17 1 Q21 8 17 15" fill="none" stroke="#777" strokeWidth="1.300" /></Svg></div>
        <div className="flex w-[34px] items-end justify-center pt-[8px]"><Svg w={16} h={18}><path d="M2 14 Q0 9 5 8 M11 15 Q6 18 5 13 Q5 9 10 9 V15 M10 12 H15 V8 Q11 6 8 9" fill="none" stroke="#5c5c5c" strokeWidth="1.500" /></Svg></div>
        <div className="flex w-[52px] justify-center pt-[2px]"><Svg w={29} h={16}><rect x="0.700" y="0.700" width="27.600" height="14.600" fill="#0c0c0c" stroke="#666" strokeWidth="1.400" /><path d="M4 5 H25 M4 8 H25" stroke="#666" strokeWidth="1.300" strokeDasharray="2 1.500" /><path d="M8 12 H20" stroke="#666" strokeWidth="1.300" /></Svg></div>
        <div className="flex w-[32px] items-center justify-center text-[14.300px] leading-none tracking-[-0.300px]">ENG</div>
        <div className="-ml-[2px] mr-[2px] flex w-[106px] flex-col items-center gap-[9px] text-[14.200px] leading-none tracking-[-0.200px]">
          <span className="tracking-[-0.400px]">13:59</span>
          <span>20-09-2020</span>
        </div>
        <div className="flex w-[38px] justify-center"><Svg w={21} h={20}><path d="M0 0 H21 V16 H13 L10 20 V16 H0 Z" fill="#6e6e6e" /><path d="M4 4 H17 M4 8 H17 M4 12 H12" stroke="#111" strokeWidth="1.500" /></Svg></div>
      </div>
      <div className="ml-[15px] h-full w-px bg-[#333]" />
    </div>
  );
}

/* ---------- video player overlay ---------- */

function PlayerTop() {
  return (
    <div className="absolute left-0 top-0 flex h-[90px] w-[1920px] items-center pl-[23px] font-['Roboto',sans-serif] text-[#ededed]">
      <h1 className="-mt-[2px] whitespace-nowrap text-[33px] leading-none tracking-[0.340px] [text-shadow:0_0_3px_rgba(0,0,0,0.6)]">CMOS NAND and NOR Gate Using Microwind Software</h1>
      <div className="ml-auto mr-[27px] flex items-center gap-[28px]">
        <Svg w={39} h={39}>
          <circle cx="19.500" cy="19.500" r="19" fill="#eeeeee" />
          <path d="M17.500 8 V21 L28 26.500" fill="none" stroke="#6c6c6c" strokeWidth="3.200" />
        </Svg>
        <Svg w={40} h={36}>
          <path d="M24 1 L39.500 17 L24 33 V23.500 Q8 22.500 1 35 Q3 12 24 10.500 Z" fill="#eeeeee" />
        </Svg>
      </div>
    </div>
  );
}

function PlayerBottom() {
  return (
    <div className="absolute left-0 top-[1005px] h-[75px] w-[1920px] font-['Roboto',sans-serif] text-[#e4e4e4]">
      <div className="mx-[30px] flex h-[7px]">
        <div className="w-[1702px] bg-[#ff0000]" />
        <div className="flex-1 border-b-[3px] border-b-[#dcdcdc] bg-[#888]" />
      </div>
      <div className="flex h-[60px] items-start pl-[62px] pt-[19px]">
        <Svg w={24} h={31}><path d="M0 0 L24 15.500 L0 31 Z" fill="#f2f2f2" /></Svg>
        <Svg w={24} h={24} className="ml-[52px] mt-[4px]"><path d="M0 0 L17 12 L0 24 Z M19.500 0 H24 V24 H19.500 Z" fill="#eeeeee" /></Svg>
        <Svg w={22} h={26} className="ml-[40px] mt-[3px]"><path d="M0 8 H6 L14 0 V26 L6 18 H0 Z M16.500 6 Q21.500 8 21.500 13 Q21.500 18 16.500 20 Z" fill="#eeeeee" /></Svg>
        <span className="ml-[33px] mt-[4px] whitespace-nowrap text-[24.500px] leading-none tracking-[0.350px] text-[#dddddd]">14:50 / 16:13</span>
        <div className="ml-auto mr-[49px] flex items-start">
          <Svg w={53} h={32}><rect x="0" y="7" width="44" height="18" rx="9" fill="#7c7c7c" /><circle cx="38" cy="16" r="15" fill="#e6e6e6" /><path d="M34 9.500 L45 16 L34 22.500 Z" fill="#0c0c0c" /></Svg>
          <Svg w={31} h={24} className="ml-[26px] mt-[4px]"><rect width="31" height="24" rx="3" fill="#8a8a8a" /><path d="M13 9.500 V8 H6 V16 H13 V14.500 M25.500 9.500 V8 H18.500 V16 H25.500 V14.500" fill="none" stroke="#111" strokeWidth="2.400" /></Svg>
          <Svg w={29} h={30} className="ml-[38px] mt-[1px]">
            <g transform="translate(14.500 15)" fill="#e6e6e6">
              {[0, 60, 120].map((a) => (
                <path key={a} transform={`rotate(${a})`} d="M-3.500 -14 H3.500 L5 -8 V8 L3.500 14 H-3.500 L-5 8 V-8 Z" />
              ))}
              <circle r="10.500" />
              <circle r="4.800" fill="#101010" />
            </g>
          </Svg>
          <Svg w={29} h={28} className="ml-[38px] mt-[2px]"><path d="M0 9 H9 V0 M20 0 V9 H29 M0 19 H9 V28 M20 28 V19 H29" fill="none" stroke="#e6e6e6" strokeWidth="4" /></Svg>
        </div>
      </div>
      <div className="absolute left-[859.500px] top-[20px] flex w-[200px] flex-col items-center">
        <span className="whitespace-nowrap text-[22.500px] leading-none tracking-[0.320px] [text-shadow:0_0_3px_rgba(0,0,0,0.6)]">Scroll for details</span>
        <Svg w={15} h={9} className="mt-[11px]"><path d="M0.500 0.500 L7.500 7.500 L14.500 0.500" fill="none" stroke="#eee" strokeWidth="2.200" /></Svg>
      </div>
    </div>
  );
}

export default function App() {
  return (
    <div className="relative flex h-[1080px] w-[1920px] flex-col overflow-hidden bg-black font-['Open_Sans','Noto_Sans',sans-serif]">
      <div className="h-[91px] shrink-0 bg-gradient-to-b from-[#555555] to-[#a8a8a8]">
        <TitleBar />
        <MenuBar />
        <ToolBar />
      </div>
      <LayoutCanvas />
      <div className="flex h-[21px] shrink-0 items-center border-b-2 border-t border-b-[#6e6e6e] border-t-[#8a8a8a] bg-[#a6a6a6] pl-[3px] text-[14px] leading-none text-[#262626]">
        <span className="w-[558px] whitespace-nowrap pt-[4px] tracking-[0.080px] [-webkit-text-stroke:0.2px_#262626]">Add text "OUTPUT", visible at location 100,-1.</span>
        <span className="h-[15px] w-px bg-[#bcbcbc]" />
      </div>
      <Taskbar />
      <Palette />
      <svg width="14" height="22" viewBox="0 0 14 22" className="absolute left-[504px] top-[60px]">
        <path d="M1 1 V16 L4.500 13 L7 19 L9.500 18 L7 12.500 H11.500 Z" fill="#a8a8a8" stroke="#222" strokeWidth="1.200" />
      </svg>
      <PlayerTop />
      <PlayerBottom />
    </div>
  );
}
